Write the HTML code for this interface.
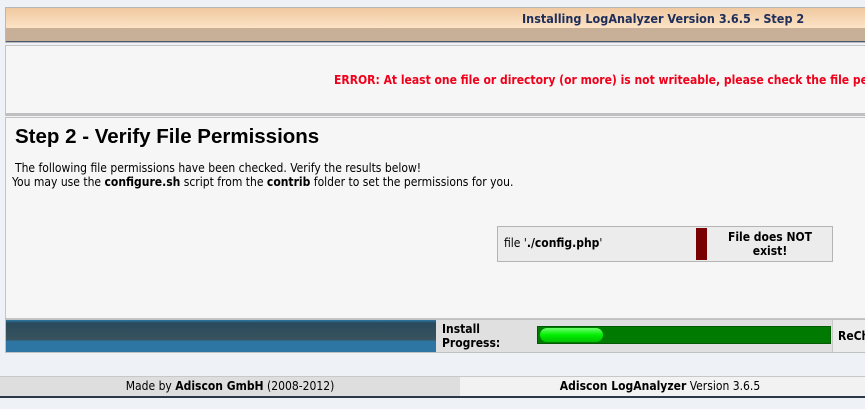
<!DOCTYPE html>
<html><head><style>
html{overflow:hidden}
body{margin:0;background:#eef1f5;font-family:"DejaVu Sans Condensed","Liberation Sans",sans-serif;font-size:12px;color:#000;width:865px;height:409px;overflow:hidden;position:relative}
div{position:absolute;box-sizing:border-box}
</style></head><body>
<div style="left:5px;top:7px;width:860px;height:36px;border:1px solid #b8b8b8;border-right:none;background:linear-gradient(#f0c8a0,#fbe4c6 60%,#f5d6b3);overflow:hidden">
 <div style="left:0;top:20px;width:100%;height:13px;background:#c8b098"></div>
 <div style="left:0;top:33px;width:100%;height:2px;background:#4a5a70"></div>
 <div style="left:516px;top:3px;font-weight:bold;color:#1e2e5a;font-size:12.5px">Installing LogAnalyzer Version 3.6.5 - Step 2</div>
</div>
<div style="left:5px;top:45px;width:860px;height:71px;background:#f6f6f6;border:1px solid #c4c4c4;border-right:none;border-bottom:3px solid #c0c0c0;overflow:hidden">
 <div style="left:328px;top:27px;color:#f0001a;font-weight:bold;white-space:nowrap;font-size:12px">ERROR: At least one file or directory (or more) is not writeable, please check the file permissions</div>
</div>
<div style="left:5px;top:117px;width:860px;height:202px;background:#f6f6f6;border:1px solid #c4c4c4;border-right:none;overflow:hidden">
 <div style="left:9px;top:7px;font-size:20.5px;font-weight:bold;font-family:'Liberation Sans',sans-serif">Step 2 - Verify File Permissions</div>
 <div style="left:9px;top:43px;font-size:12px">The following file permissions have been checked. Verify the results below!</div>
 <div style="left:6px;top:57px;font-size:12px;white-space:nowrap">You may use the <b>configure.sh</b> script from the <b>contrib</b> folder to set the permissions for you.</div>
 <div style="left:491px;top:108px;width:336px;height:36px;border:1px solid #b4b4b4;background:#ececec">
  <div style="left:6px;top:9px;font-size:12px">file '<b>./config.php</b>'</div>
  <div style="left:198px;top:1px;width:11px;height:32px;background:#780000"></div>
  <div style="left:222px;top:3px;width:100px;text-align:center;font-weight:bold;font-size:12px;line-height:14px">File does NOT exist!</div>
 </div>
</div>
<div style="left:5px;top:319px;width:860px;height:34px;background:#e0e0e0;border:1px solid #c0c0c0;border-right:none;overflow:hidden">
 <div style="left:0;top:0;width:430px;height:32px;background:linear-gradient(#2c7aa8 0,#2a4a5c 3px,#39535f 20px,#2d75a3 21px,#2d75a3)"></div>
 <div style="left:436px;top:2px;font-weight:bold;line-height:14px">Install<br>Progress:</div>
 <div style="left:531px;top:6px;width:294px;height:18px;background:#007a00;border:1px solid #005a00">
  <div style="left:2px;top:1px;width:63px;height:14px;border-radius:7px;background:linear-gradient(#6cff6c,#00ee00 50%,#00c000)"></div>
 </div>
 <div style="left:826px;top:0;width:50px;height:32px;background:#ececec;border-left:1px solid #c8c8c8"></div>
 <div style="left:832px;top:9px;font-weight:bold">ReCh</div>
</div>
<div style="left:0;top:376px;width:865px;height:22px;background:#f2f2f2;border-top:1px solid #c8c8c8;border-bottom:2px solid #2a3848">
 <div style="left:0;top:0;width:460px;height:19px;background:#dedede"></div>
 <div style="left:0;top:2px;width:460px;text-align:center;font-size:12px">Made by <b>Adiscon GmbH</b> (2008-2012)</div>
 <div style="left:460px;top:2px;width:400px;text-align:center;font-size:12px"><b>Adiscon LogAnalyzer</b> Version 3.6.5</div>
</div>
</body></html>
